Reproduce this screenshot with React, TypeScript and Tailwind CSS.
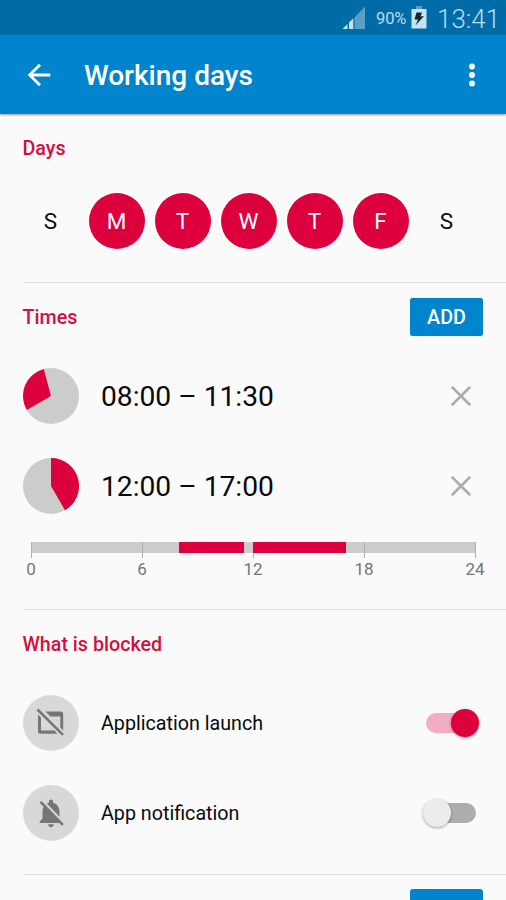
import clsx from "clsx";

const days = [
  { label: "S", active: false },
  { label: "M", active: true },
  { label: "T", active: true },
  { label: "W", active: true },
  { label: "T", active: true },
  { label: "F", active: true },
  { label: "S", active: false },
];

const times = [
  { label: "08:00 – 11:30", from: 8, to: 11.5 },
  { label: "12:00 – 17:00", from: 12, to: 17 },
];

const ticks = [0, 6, 12, 18, 24];

const percent = (hours: number) => `${(hours / 24) * 100}%`;

// point on the edge of a 12 hour clock face
const clockPoint = (hours: number) => {
  const angle = (hours / 12) * Math.PI * 2;
  return `${28 + 28 * Math.sin(angle)} ${28 - 28 * Math.cos(angle)}`;
};

const StatusBar = () => (
  <div className="flex h-[35px] items-center bg-[#006ca7] text-[#b9dcf0]">
    <svg className="ml-[342px] h-6 w-6 shrink-0" viewBox="0 0 24 24">
      <path d="M12.500 11.500L23 0.500V23H12.500z" fill="#5b9fc7" />
      <path d="M0.500 23L5.500 18V23zM7 16.500L11.300 12.200V23H7z" fill="#c4e3f3" />
    </svg>
    <span className="ml-[10px] w-[32px] pt-[3px] text-[16.500px] tracking-[-0.100px]">90%</span>
    <svg className="ml-[3px] h-[23px] w-4 shrink-0" viewBox="0 0 16 23">
      <path d="M5 0h6v4H5z" fill="#5b9fc7" />
      <path d="M0.500 3h15V22.500H0.500z" fill="#c4e3f3" />
      <path d="M5.500 6.500H11L9.500 10.500L13 10L4.500 19.500L7 13.500H3.500z" fill="#12242e" />
    </svg>
    <span className="ml-[10px] pt-[3px] text-[26px] font-light leading-8">13:41</span>
  </div>
);

const Header = () => (
  <div className="relative flex h-[79px] items-center bg-[#0084ce] text-white shadow-[0_1px_2px_rgba(0,0,0,0.4)]">
    <svg className="ml-[22px] h-[34px] w-[34px]" viewBox="0 0 24 24" fill="currentColor">
      <path d="M20 11H7.830l5.590-5.590L12 4l-8 8 8 8 1.410-1.410L7.830 13H20v-2z" />
    </svg>
    <h1 className="ml-7 pt-[2px] text-[28px] font-medium leading-8">Working days</h1>
    <svg className="ml-auto mr-[17px] h-[34px] w-[34px]" viewBox="0 0 24 24" fill="currentColor">
      <circle cx="12" cy="6" r="2.100" />
      <circle cx="12" cy="12" r="2.100" />
      <circle cx="12" cy="18" r="2.100" />
    </svg>
  </div>
);

const SectionTitle = ({ children }: { children: string }) => (
  <h2 className="pt-[2px] text-[19.700px] font-medium leading-6 text-[#d0103f]">{children}</h2>
);

const Clock = ({ from, to }: { from: number; to: number }) => (
  <svg className="h-14 w-14" viewBox="0 0 56 56">
    <circle cx="28" cy="28" r="28" fill="#cccccc" />
    <path d={`M28 28L${clockPoint(from)}A28 28 0 0 1 ${clockPoint(to)}z`} fill="#dc003c" />
  </svg>
);

const Timeline = () => (
  <div className="ml-[31px] w-[444px]">
    <div className="relative h-[11px] bg-[#cccccc]">
      {ticks.map((tick) => (
        <div
          key={tick}
          className="absolute top-0 h-4 w-px bg-[#b0b0b0]"
          style={{ left: percent(tick) }}
        />
      ))}
      {times.map((time) => (
        <div
          key={time.label}
          className="absolute top-0 h-full bg-[#dc003c]"
          style={{ left: percent(time.from), width: percent(time.to - time.from) }}
        />
      ))}
    </div>
    <div className="-mx-5 mt-[6px] flex justify-between text-[17px] leading-5 text-[#757575]">
      {ticks.map((tick) => (
        <span key={tick} className="w-10 text-center">
          {tick}
        </span>
      ))}
    </div>
  </div>
);

const LaunchOffIcon = () => (
  <svg className="h-[34px] w-[34px]" viewBox="0 0 34 34" fill="#757575">
    <path d="M4 8.500L7 11.500V24.500H20.500L23.500 27.800H6Q4 27.800 4 25.800z" />
    <path d="M11.500 5.500H26.500Q29.200 5.500 29.200 8.200V24.500L26.300 21.500V10.500H16.500z" />
    <path d="M3.500 3.500L29 28.800" stroke="#757575" strokeWidth="2.500" />
  </svg>
);

const BellOffIcon = () => (
  <svg className="h-[34px] w-[34px]" viewBox="0 0 24 24" fill="#757575">
    <path d="M20 18.690L7.840 6.140 5.270 3.490 4 4.760l2.800 2.800v.010c-.520.990-.800 2.160-.800 3.420v5l-2 2v1h13.730l2 2L21 19.720l-1-1.030zM12 22c1.110 0 2-.890 2-2h-4c0 1.110.890 2 2 2zm6-7.320V11c0-3.080-1.640-5.640-4.500-6.320V4c0-.830-.670-1.500-1.500-1.500s-1.500.670-1.500 1.500v.680c-.150.030-.290.080-.420.120-.340.110-.690.260-1.010.430L18 14.680z" />
  </svg>
);

const Switch = ({ checked }: { checked: boolean }) => (
  <div
    className={clsx(
      "flex h-5 w-[50px] items-center rounded-full",
      checked ? "justify-end bg-[#f3adc0]" : "bg-[#adadad]"
    )}
  >
    <div
      className={clsx(
        "h-7 w-7 shrink-0 rounded-full shadow-[0_1px_3px_rgba(0,0,0,0.35)]",
        checked ? "-mr-[3px] bg-[#dc003c]" : "-ml-[3px] bg-[#ececec]"
      )}
    />
  </div>
);

const App = () => {
  return (
    <div className="h-[900px] w-[506px] overflow-hidden bg-[#fafafa] font-['Roboto','Liberation_Sans',sans-serif] text-[#0a0a0a]">
      <StatusBar />
      <Header />

      <section className="h-[168px] pl-[22.500px] pt-[21px]">
        <SectionTitle>Days</SectionTitle>
        <div className="mt-[32px] flex gap-[10px]">
          {days.map((day, i) => (
            <div
              key={i}
              className={clsx(
                "flex h-14 w-14 items-center justify-center rounded-full pt-[2px] text-[22.500px]",
                day.active && "bg-[#dc003c] text-white"
              )}
            >
              {day.label}
            </div>
          ))}
        </div>
      </section>

      <section className="h-[327px]">
        <div className="ml-[22.500px] flex h-[69px] items-center justify-between border-t border-[#dedede] pr-[23px]">
          <SectionTitle>Times</SectionTitle>
          <button className="h-[38px] w-[73px] rounded-[3px] bg-[#0084ce] pt-[2px] text-[19.700px] font-medium text-white shadow-[0_0_1px_rgba(0,60,100,0.5)]">
            ADD
          </button>
        </div>
        {times.map((time) => (
          <div key={time.label} className="flex h-[90px] items-center pl-[22.500px] pr-[35px]">
            <Clock from={time.from} to={time.to} />
            <span className="ml-[22.500px] pt-[2px] text-[28.200px] leading-8">{time.label}</span>
            <svg className="ml-auto h-5 w-5" viewBox="0 0 20 20">
              <path
                d="M1.500 1.500L18.500 18.500M18.500 1.500L1.500 18.500"
                stroke="#ababab"
                strokeWidth="2.500"
                strokeLinecap="round"
              />
            </svg>
          </div>
        ))}
        <div className="pt-[11px]">
          <Timeline />
        </div>
      </section>

      <section className="h-[265px]">
        <div className="ml-[22.500px] flex h-[69px] items-center border-t border-[#dedede]">
          <SectionTitle>What is blocked</SectionTitle>
        </div>
        <div className="flex h-[90px] items-center pl-[22.500px] pr-[30.500px]">
          <div className="flex h-14 w-14 items-center justify-center rounded-full bg-[#d8d8d8]">
            <LaunchOffIcon />
          </div>
          <span className="ml-[22.500px] mr-auto pt-[2px] text-[19.700px]">Application launch</span>
          <Switch checked />
        </div>
        <div className="flex h-[90px] items-center pl-[22.500px] pr-[30.500px]">
          <div className="flex h-14 w-14 items-center justify-center rounded-full bg-[#d8d8d8]">
            <BellOffIcon />
          </div>
          <span className="ml-[22.500px] mr-auto pt-[2px] text-[19.700px]">App notification</span>
          <Switch checked={false} />
        </div>
      </section>

      <section className="ml-[22.500px] flex justify-end border-t border-[#dedede] pr-[23px] pt-[14px]">
        <button className="h-[38px] w-[73px] rounded-[3px] bg-[#0084ce]" />
      </section>
    </div>
  );
};

export default App;
